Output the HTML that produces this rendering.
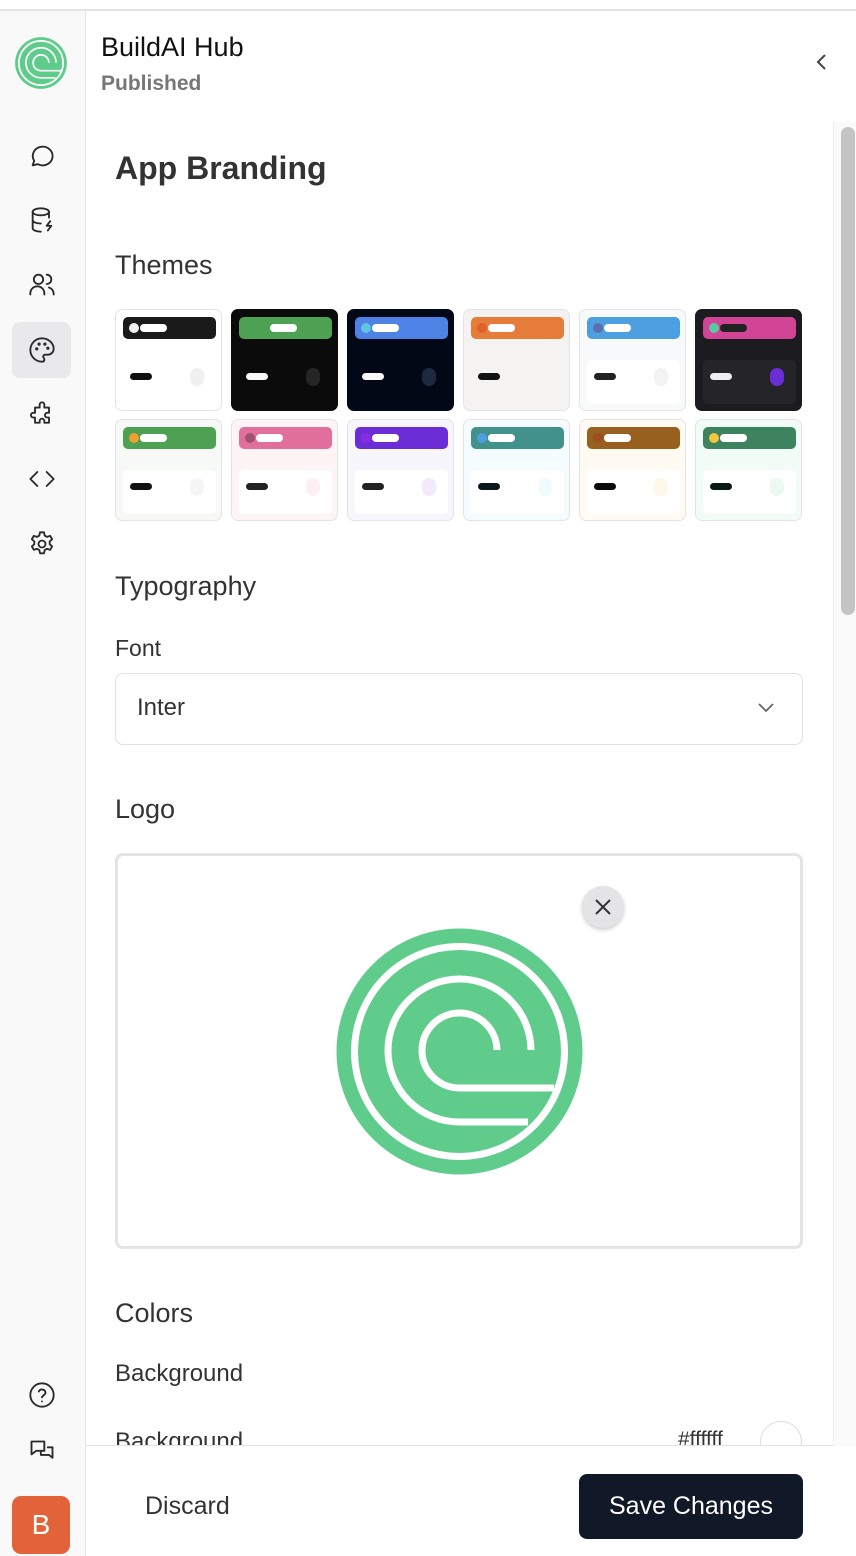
<!DOCTYPE html>
<html><head><meta charset="utf-8"><style>
*{box-sizing:border-box;margin:0;padding:0}
body{width:856px;height:1556px;overflow:hidden;background:#fff;font-family:"Liberation Sans",sans-serif;color:#2d2f33;position:relative}
.top{position:absolute;left:0;top:0;width:856px;height:11px;border-bottom:2px solid #e3e3e3;background:#fff}
.side{position:absolute;left:0;top:11px;width:86px;height:1545px;background:#f9f9f9;border-right:1px solid #e6e6e6}
.ic{position:absolute;left:12px;width:59px;height:56px;display:flex;align-items:center;justify-content:center}
.ic svg{width:28px;height:28px;fill:none;stroke:#2a2a2a;stroke-width:1.6;stroke-linecap:round;stroke-linejoin:round}
.t{position:absolute;white-space:nowrap}
.card{position:absolute;width:107px;height:102px;border-radius:7px;border:1px solid #e4e4e8;overflow:hidden}
.hd{position:absolute;left:7px;top:7px;width:93px;height:22px;border-radius:5px}
.dt{position:absolute;left:6px;top:6px;width:10px;height:10px;border-radius:50%}
.br{position:absolute;left:17px;top:7px;width:27px;height:8px;border-radius:4px;background:#fff}
.pn{position:absolute;left:7px;top:50px;width:93px;height:44px;border-radius:5px}
.ln{position:absolute;left:14px;top:63px;width:22px;height:7px;border-radius:4px}
.cc{position:absolute;left:74px;top:58px;width:14px;height:18px;border-radius:7px}
</style></head><body>
<div class="top"></div>
<div class="side">
 <svg style="position:absolute;left:15px;top:26px" width="52" height="52" viewBox="0 0 247 247"><circle cx="123.5" cy="123.5" r="123" fill="#5fcc8c"/><g fill="none" stroke="#fff" stroke-width="8"><circle cx="123.5" cy="123.5" r="105"/><path d="M195 122A71.5 71.5 0 1 0 123.5 194H192"/><path d="M161 122A37.5 37.5 0 1 0 123.5 160H218"/></g></svg>
 <div class="ic" style="top:117px"><svg viewBox="0 0 24 24"><path d="M4 20l1.3-3.9A8.5 8 0 1 1 8.5 19z"/></svg></div>
 <div class="ic" style="top:181px"><svg viewBox="0 0 24 24"><ellipse cx="11" cy="5" rx="7" ry="3"/><path d="M4 5v14c0 1.7 3 3 7 3M4 12c0 1.7 3 3 7 3M18 5v5M19 13l-3 4h4l-3 4"/></svg></div>
 <div class="ic" style="top:245px"><svg viewBox="0 0 24 24"><circle cx="9" cy="8" r="4"/><path d="M2 21v-1a6 6 0 0 1 12 0v1M16 4a4 4 0 0 1 0 8M18 15a6 6 0 0 1 4 5v1"/></svg></div>
 <div class="ic" style="top:311px;background:#e9e9eb;border-radius:8px"><svg viewBox="0 0 24 24"><path d="M12 2a10 10 0 0 0 0 20c1.5 0 2-1 2-2s-1-1.5-1-2.5 1-1.5 2-1.5h2a5 5 0 0 0 5-5C22 6 17.5 2 12 2z"/><circle cx="7.5" cy="11" r=".6"/><circle cx="9.5" cy="7" r=".6"/><circle cx="14.5" cy="7" r=".6"/><circle cx="17" cy="10.5" r=".6"/></svg></div>
 <div class="ic" style="top:375px"><svg viewBox="0 0 24 24"><path d="M10 2.5a2 2 0 0 1 4 0V5h4v4.5h-1.5a2 2 0 0 0 0 4H18V18h-4v-1.5a2 2 0 0 0-4 0V18H6v-4.5H4.5a2 2 0 0 1 0-4H6V5h4z" transform="translate(0 1.5)"/></svg></div>
 <div class="ic" style="top:440px"><svg viewBox="0 0 24 24"><path d="M8 6l-6 6 6 6M16 6l6 6-6 6"/></svg></div>
 <div class="ic" style="top:505px"><svg viewBox="0 0 24 24"><circle cx="12" cy="12" r="3"/><path d="M10.3 2h3.4l.6 2.8 2 1.1 2.7-.9 1.7 2.9-2.1 1.9v2.4l2.1 1.9-1.7 2.9-2.7-.9-2 1.1-.6 2.8h-3.4l-.6-2.8-2-1.1-2.7.9-1.7-2.9 2.1-1.9V9.8L3.3 7.9 5 5l2.7.9 2-1.1z"/></svg></div>
 <div class="ic" style="top:1356px"><svg viewBox="0 0 24 24"><circle cx="12" cy="12" r="10"/><path d="M9.3 9a3 3 0 0 1 5.7 1c0 2-3 2.5-3 4M12 17.5h.01"/></svg></div>
 <div class="ic" style="top:1413px"><svg viewBox="0 0 24 24"><path d="M3 3h11v8H7l-4 3zM17 8h4v9l-3-2.5h-7V12"/></svg></div>
 <div style="position:absolute;left:12px;top:1485px;width:58px;height:58px;border-radius:9px;background:#e2623a;color:#fff;font-size:28px;display:flex;align-items:center;justify-content:center">B</div>
</div>
<div class="t" style="left:101px;top:32px;font-size:27px;color:#111">BuildAI Hub</div>
<div class="t" style="left:101px;top:72px;font-size:21px;color:#777;font-weight:bold">Published</div>
<svg style="position:absolute;left:814px;top:53px" width="16" height="18" viewBox="0 0 16 18"><path d="M11 2L4 9l7 7" fill="none" stroke="#444" stroke-width="2"/></svg>
<div style="position:absolute;left:833px;top:122px;width:23px;height:1324px;border-left:1px solid #eee;background:#fafafa"><div style="position:absolute;left:7px;top:5px;width:14px;height:488px;border-radius:7px;background:#c4c4c4"></div></div>
<div class="t" style="left:115px;top:150px;font-size:32px;font-weight:bold;color:#333">App Branding</div>
<div class="t" style="left:115px;top:250px;font-size:27px;color:#333">Themes</div>
<div id="cards"></div>
<div class="t" style="left:115px;top:571px;font-size:27px;color:#333">Typography</div>
<div class="t" style="left:115px;top:635px;font-size:23px;color:#333">Font</div>
<div style="position:absolute;left:115px;top:673px;width:688px;height:72px;border:1px solid #e1e1e4;border-radius:8px"></div>
<div class="t" style="left:137px;top:694px;font-size:24px;color:#333">Inter</div>
<svg style="position:absolute;left:757px;top:702px" width="18" height="12" viewBox="0 0 18 12"><path d="M2 2l7 7 7-7" fill="none" stroke="#666" stroke-width="1.8"/></svg>
<div class="t" style="left:115px;top:794px;font-size:27px;color:#333">Logo</div>
<div style="position:absolute;left:115px;top:853px;width:688px;height:396px;border:3px solid #e3e4e8;border-radius:8px"></div>
<svg style="position:absolute;left:336px;top:928px" width="247" height="247" viewBox="0 0 247 247"><circle cx="123.5" cy="123.5" r="123" fill="#5fcc8c"/><g fill="none" stroke="#fff" stroke-width="7"><circle cx="123.5" cy="123.5" r="105"/><path d="M195 122A71.5 71.5 0 1 0 123.5 194H192"/><path d="M161 122A37.5 37.5 0 1 0 123.5 160H218"/></g></svg>
<div style="position:absolute;left:582px;top:886px;width:42px;height:42px;border-radius:50%;background:#e4e4e6;box-shadow:0 2px 4px rgba(0,0,0,.2)"></div>
<svg style="position:absolute;left:594px;top:898px" width="18" height="18" viewBox="0 0 18 18"><path d="M2 2l14 14M16 2L2 16" stroke="#333" stroke-width="2"/></svg>
<div class="t" style="left:115px;top:1298px;font-size:27px;color:#333">Colors</div>
<div class="t" style="left:115px;top:1360px;font-size:24px;color:#333">Background</div>
<div class="t" style="left:115px;top:1428px;font-size:24px;color:#333">Background</div>
<div class="t" style="left:678px;top:1428px;font-size:21px;color:#333">#ffffff</div>
<div style="position:absolute;left:760px;top:1421px;width:42px;height:42px;border-radius:50%;border:1px solid #ddd;background:#fff"></div>
<div style="position:absolute;left:86px;top:1445px;width:747px;height:111px;background:#fff;border-top:1px solid #e4e4e6"></div>
<div class="t" style="left:145px;top:1492px;font-size:25px;color:#333">Discard</div>
<div style="position:absolute;left:579px;top:1474px;width:224px;height:65px;border-radius:8px;background:#111827;color:#fff;font-size:25px;display:flex;align-items:center;justify-content:center">Save Changes</div>
<script>
var d=[["#fff","#1a1a1a","#f2f2f2","","#111","#f0f0f0","#fff"],
["#0b0b0b","#4ea052","","","#f8f8f8","#252525","#fff"],
["#020816","#4f82e5","#5ec4e0","","#f8f8f8","#1e293b","#fff"],
["#f4f3f1","#e67c39","#e0602a","","#111","","#fff"],
["#f7f9fb","#4ca0e0","#5a6fb0","#fff","#222","#f2f3f5","#fff"],
["#1c1b20","#d24495","#5ac8a0","#252429","#eee","#6a2ed6","#222"],
["#f6f9f6","#4ea052","#f0a030","#fff","#111","#f4f6f4","#fff"],
["#fdf4f5","#e06f9c","#a05070","#fff","#222","#fdf0f2","#fff"],
["#f8f6fd","#6b2ed6","#8a2be2","#fff","#222","#f0eafa","#fff"],
["#f4fcfd","#42918a","#4ca0e0","#fff","#0a1a1a","#f0fbfc","#fff"],
["#fffbf3","#98601e","#9a5020","#fff","#0a0a0a","#fdf8ea","#fff"],
["#f0fcf5","#3e8360","#f0c840","#fff","#0a1a14","#eafaf0","#fff"]];
var h="";d.forEach(function(c,i){var x=115+(i%6)*116,y=309+Math.floor(i/6)*110;
h+='<div class="card" style="left:'+x+'px;top:'+y+'px;background:'+c[0]+';'+(i==1||i==2||i==5?'border-color:'+c[0]:'')+'"><div class="hd" style="background:'+c[1]+'">'+(c[2]?'<div class="dt" style="background:'+c[2]+'"></div>':'')+'<div class="br" style="background:'+c[6]+(c[2]?'':';left:'+(i==1?31:17)+'px')+'"></div></div>'+(c[3]?'<div class="pn" style="background:'+c[3]+'"></div>':'')+'<div class="ln" style="background:'+c[4]+'"></div>'+(c[5]?'<div class="cc" style="background:'+c[5]+'"></div>':'')+'</div>';});
document.getElementById("cards").innerHTML=h;
</script>
</body></html>
